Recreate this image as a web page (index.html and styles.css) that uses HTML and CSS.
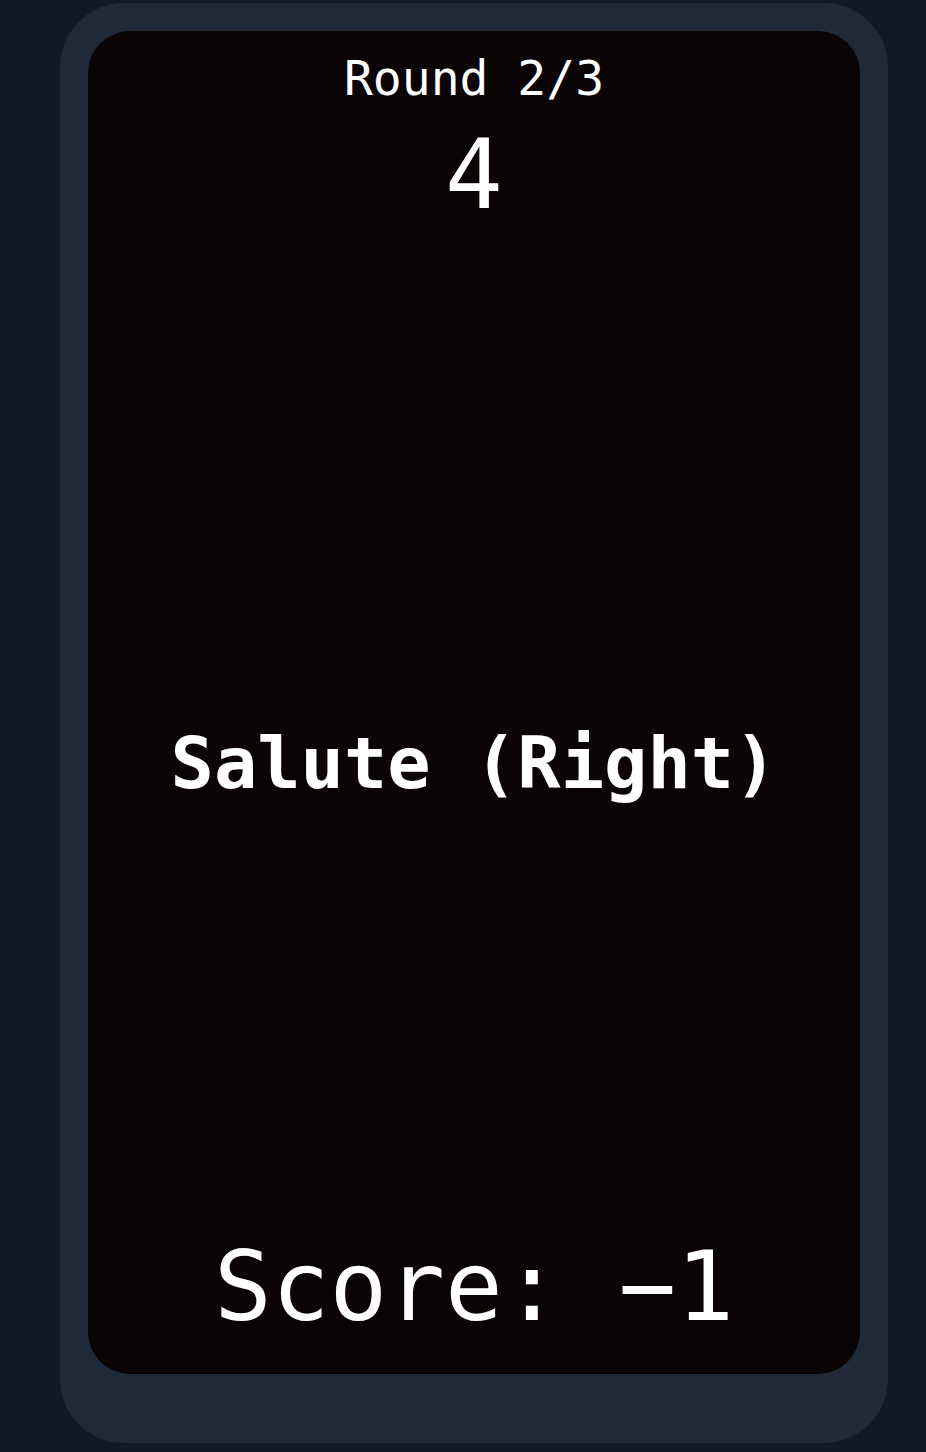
FILE: index.html
```html
<!DOCTYPE html>
<html lang="en">
<head>
<meta charset="utf-8">
<title>Round 2/3</title>
<link rel="stylesheet" href="styles.css">
</head>
<body>
  <div class="device">
    <main class="screen">
      <div class="round">Round 2/3</div>
      <div class="countdown">4</div>
      <div class="pose">Salute (Right)</div>
      <div class="score">Score: −1</div>
    </main>
  </div>
</body>
</html>
```

FILE: styles.css
```css
html, body {
  margin: 0;
  padding: 0;
  background: #111827;
  height: 100%;
}

body {
  padding: 3px 0 0 60px;
  box-sizing: border-box;
  font-family: "DejaVu Sans Mono", "Liberation Mono", monospace;
  color: #ffffff;
}

.device {
  width: 828px;
  height: 1440px;
  box-sizing: border-box;
  padding: 28px 28px 69px 28px;
  background: #1f2937;
  border-radius: 64px;
}

.screen {
  height: 100%;
  box-sizing: border-box;
  padding: 19px 0 31px;
  background: #0a0404;
  border-radius: 42px;
  display: flex;
  flex-direction: column;
  align-items: center;
  text-align: center;
}

.round {
  font-size: 48px;
  line-height: 56px;
}

.countdown {
  margin-top: 13px;
  font-size: 96px;
  line-height: 112px;
}

.pose {
  margin-top: 490px;
  font-size: 72px;
  font-weight: bold;
  line-height: 84px;
}

.score {
  margin-top: auto;
  font-size: 96px;
  line-height: 112px;
}
```
